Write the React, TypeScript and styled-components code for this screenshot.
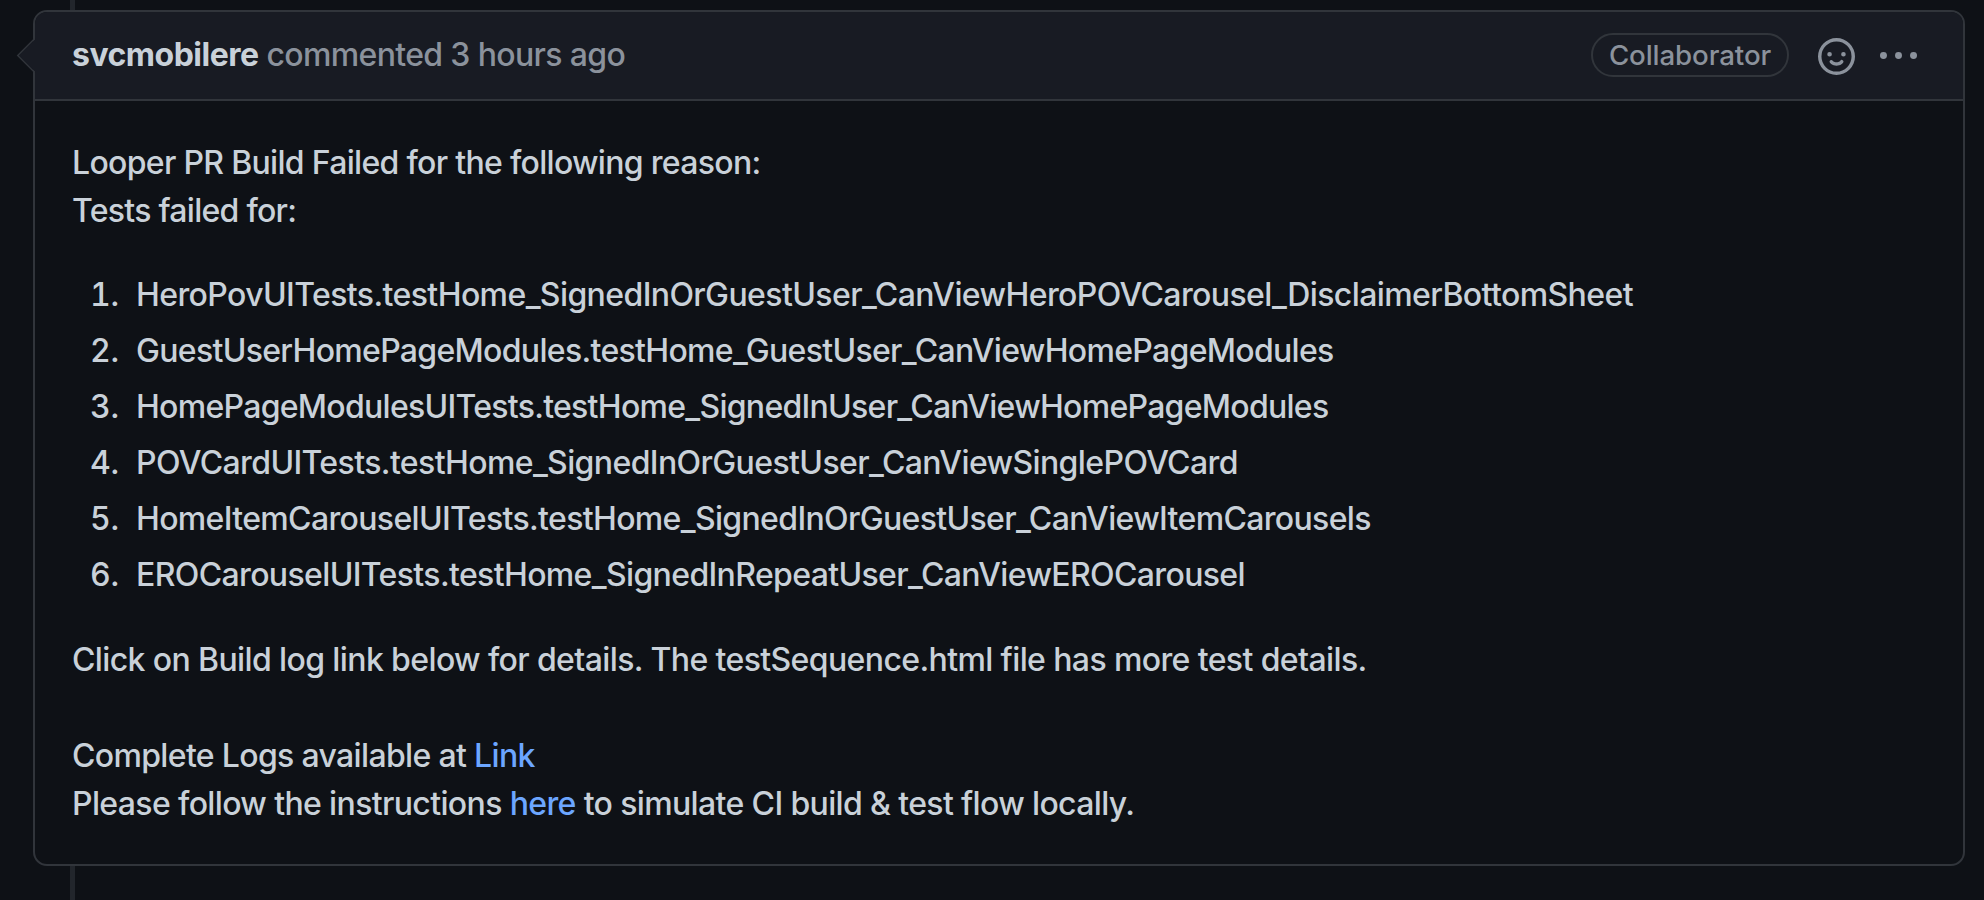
import React from "react";
import styled, { createGlobalStyle } from "styled-components";

const color = {
  canvas: "#0e1116",
  header: "#181b23",
  border: "#31353b",
  rail: "#22262c",
  text: "#c9d1d9",
  muted: "#8b929c",
  link: "#6ca6ff",
};

const GlobalStyle = createGlobalStyle`
  *, *::before, *::after {
    box-sizing: border-box;
  }
  body {
    margin: 0;
    background: ${color.canvas};
    color: ${color.text};
    font-family: Inter, "Liberation Sans", sans-serif;
    font-size: 32px;
    font-weight: 450;
    line-height: 48px;
  }
`;

const Timeline = styled.main`
  display: flex;
  flex-direction: column;
  height: 900px;
  padding: 0 19px 0 33px;
  overflow: hidden;
`;

const Rail = styled.div<{ $height: number }>`
  flex: none;
  width: 5px;
  height: ${(p) => p.$height}px;
  margin-left: 37px;
  background: ${color.rail};
`;

const Card = styled.article`
  position: relative;
  flex: none;
  height: 856px;
  border: 2px solid ${color.border};
  border-radius: 14px;
`;

const Caret = styled.svg`
  position: absolute;
  left: -19px;
  top: 25px;
  width: 20px;
  height: 38px;
`;

const Header = styled.header`
  display: flex;
  align-items: center;
  height: 89px;
  padding: 0 46px 0 37px;
  background: ${color.header};
  border-bottom: 2px solid ${color.border};
  border-radius: 12px 12px 0 0;
`;

const Byline = styled.h3`
  flex: 1;
  margin: 0;
  padding-bottom: 2px;
  font-size: 32px;
  font-weight: 450;
  letter-spacing: -0.65px;
  white-space: pre;
  color: ${color.muted};
`;

const Author = styled.strong`
  font-weight: 650;
  letter-spacing: -0.5px;
  color: ${color.text};
`;

const RoleLabel = styled.span`
  width: 198px;
  height: 44px;
  margin-bottom: 2px;
  border: 2px solid ${color.border};
  border-radius: 22px;
  font-size: 27.7px;
  font-weight: 550;
  line-height: 40px;
  letter-spacing: -0.1px;
  text-align: center;
  color: ${color.muted};
`;

const IconButton = styled.button<{ $gap: number; $drop?: number }>`
  display: flex;
  margin: ${(p) => p.$drop ?? 0}px 0 0 ${(p) => p.$gap}px;
  padding: 0;
  border: 0;
  background: none;
  color: ${color.muted};
`;

const Body = styled.section`
  padding: 38px 37px;
`;

const Line = styled.p<{ $track: number }>`
  margin: 0;
  min-height: 48px;
  letter-spacing: ${(p) => p.$track}px;
  white-space: pre;
`;

const TestList = styled.ol`
  display: flex;
  flex-direction: column;
  gap: 8px;
  margin: 36px 0 37px;
  padding: 0;
  list-style: none;
`;

const TestItem = styled.li<{ $track: number }>`
  display: flex;
  letter-spacing: ${(p) => p.$track}px;
`;

const Ordinal = styled.span`
  width: 47px;
  margin-right: 17px;
  text-align: right;
  letter-spacing: -0.2px;
  font-variant-numeric: tabular-nums;
`;

const Link = styled.a`
  color: ${color.link};
  text-decoration: none;
`;

const tests = [
  { name: "HeroPovUITests.testHome_SignedInOrGuestUser_CanViewHeroPOVCarousel_DisclaimerBottomSheet", track: -0.6 },
  { name: "GuestUserHomePageModules.testHome_GuestUser_CanViewHomePageModules", track: -0.685 },
  { name: "HomePageModulesUITests.testHome_SignedInUser_CanViewHomePageModules", track: -0.715 },
  { name: "POVCardUITests.testHome_SignedInOrGuestUser_CanViewSinglePOVCard", track: -0.61 },
  { name: "HomeItemCarouselUITests.testHome_SignedInOrGuestUser_CanViewItemCarousels", track: -0.655 },
  { name: "EROCarouselUITests.testHome_SignedInRepeatUser_CanViewEROCarousel", track: -0.635 },
];

const Smiley = () => (
  <svg width="37" height="37" viewBox="0 0 16 16" fill="currentColor" fillRule="evenodd">
    <path d="M1.5 8a6.5 6.5 0 1113 0 6.5 6.5 0 01-13 0zM8 0a8 8 0 100 16A8 8 0 008 0zM5 8a1 1 0 100-2 1 1 0 000 2zm7-1a1 1 0 11-2 0 1 1 0 012 0zM5.32 9.636a.75.75 0 011.038.175l.007.009c.103.118.22.222.35.31.264.178.683.37 1.285.37.602 0 1.02-.192 1.285-.371.13-.088.247-.192.35-.31l.007-.008a.75.75 0 111.222.87l-.022.03a1.984 1.984 0 01-.184.213c-.16.166-.338.316-.53.445-.63.418-1.37.638-2.127.629-.946 0-1.652-.308-2.126-.63a3.331 3.331 0 01-.715-.657l-.022-.03a.75.75 0 01.182-1.045z" />
  </svg>
);

const Kebab = () => (
  <svg width="37" height="37" viewBox="0 0 16 16" fill="currentColor">
    <circle cx="1.5" cy="8" r="1.5" />
    <circle cx="8" cy="8" r="1.5" />
    <circle cx="14.5" cy="8" r="1.5" />
  </svg>
);

export default function App() {
  return (
    <>
      <GlobalStyle />
      <Timeline>
        <Rail $height={10} />
        <Card>
          <Header>
            <Byline>
              <Author>svcmobilere</Author> commented 3 hours ago
            </Byline>
            <RoleLabel>Collaborator</RoleLabel>
            <IconButton $gap={29} $drop={2} aria-label="Add reaction">
              <Smiley />
            </IconButton>
            <IconButton $gap={25} aria-label="Show options">
              <Kebab />
            </IconButton>
          </Header>
          <Caret viewBox="0 0 20 38">
            <path d="M20 1.5 L2 18.5 L20 35.5Z" fill={color.header} />
            <path d="M18.5 1.8 L1.7 18.5 L18.5 35.2" fill="none" stroke={color.border} strokeWidth="1.4" />
          </Caret>
          <Body>
            <Line $track={-0.69}>Looper PR Build Failed for the following reason:</Line>
            <Line $track={-0.72}>Tests failed for:</Line>
            <TestList>
              {tests.map((test, i) => (
                <TestItem key={test.name} $track={test.track}>
                  <Ordinal>{i + 1}.</Ordinal>
                  {test.name}
                </TestItem>
              ))}
            </TestList>
            <Line $track={-0.615}>
              Click on Build log link below for details. The testSequence.html file has more test details.
            </Line>
            <Line $track={0} />
            <Line $track={-0.66}>
              Complete Logs available at <Link>Link</Link>
            </Line>
            <Line $track={-0.635}>
              Please follow the instructions <Link>here</Link> to simulate CI build &amp; test flow locally.
            </Line>
          </Body>
        </Card>
        <Rail $height={34} />
      </Timeline>
    </>
  );
}
